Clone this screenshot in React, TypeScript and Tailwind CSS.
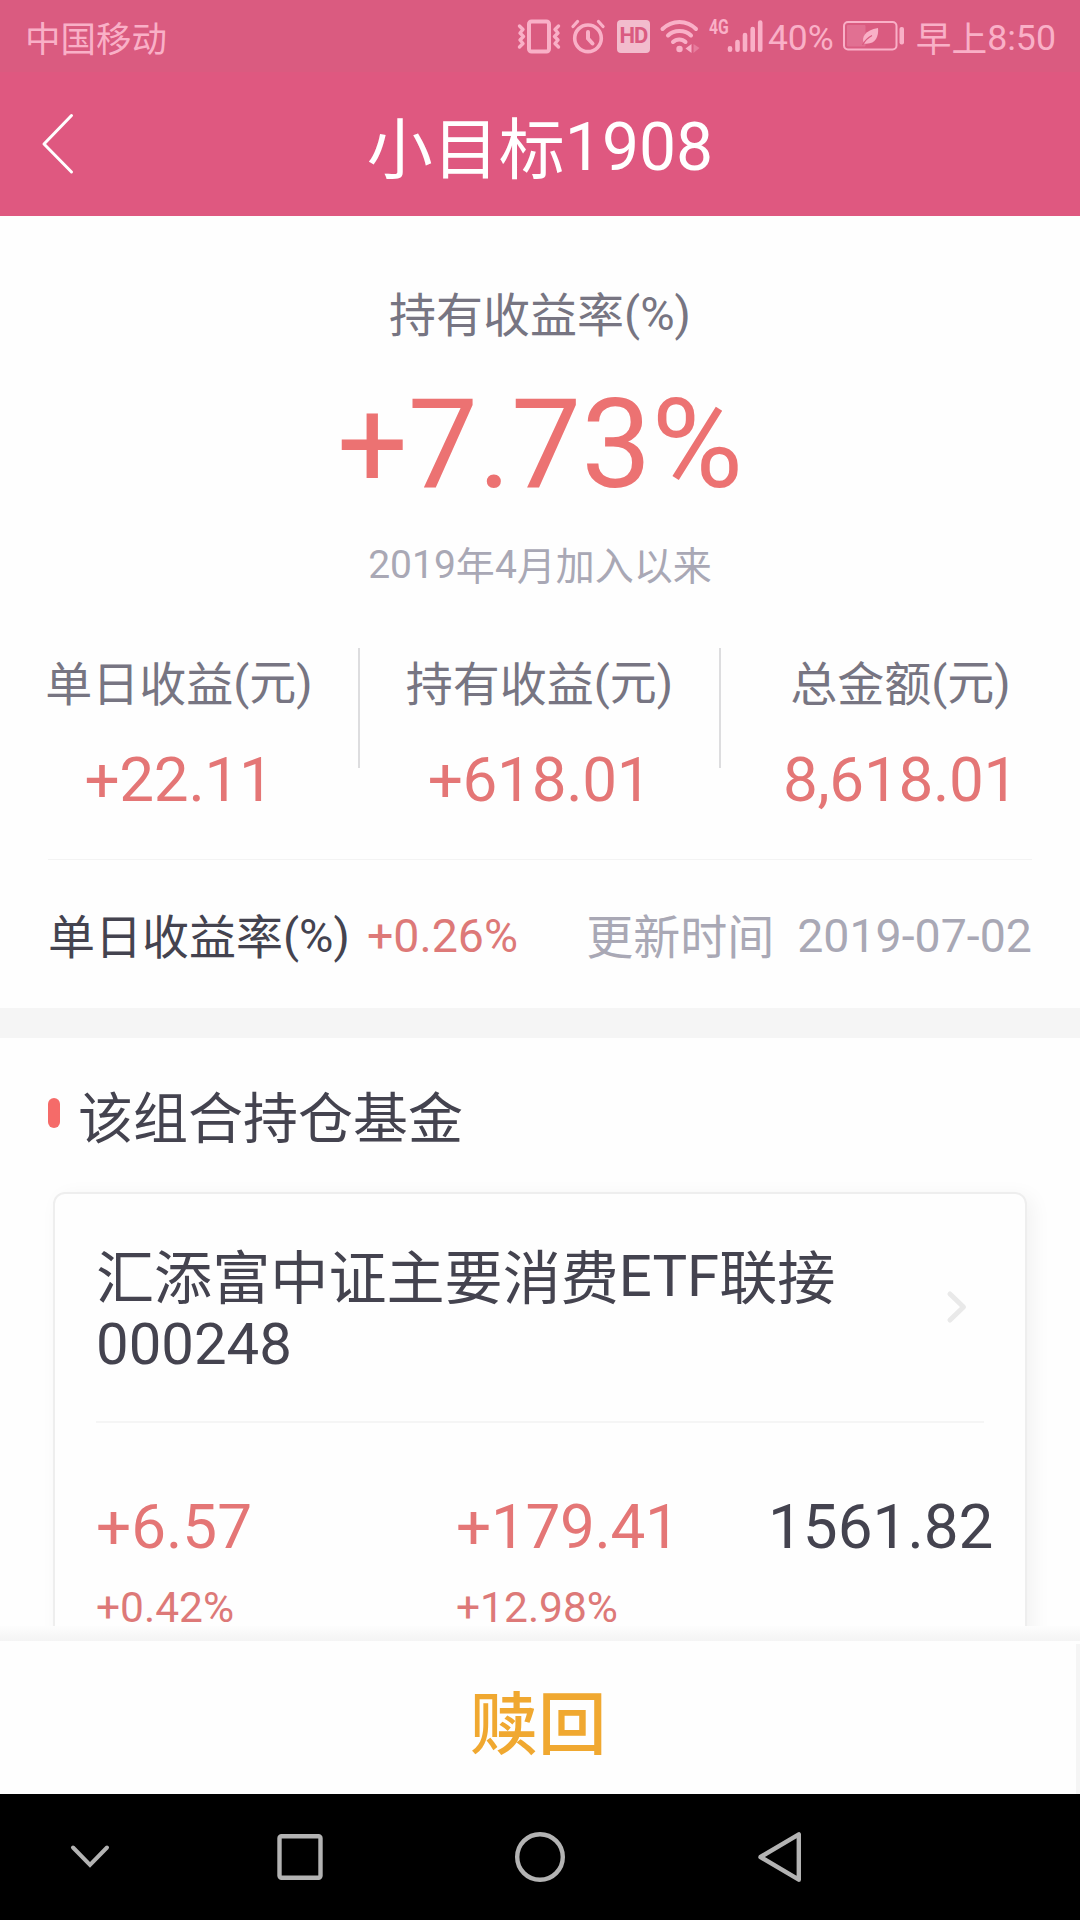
import { ReactNode } from "react";

const summary = [
    { label: "单日收益", unit: "(元)", value: "+22.11", width: "w-[360px]" },
    { label: "持有收益", unit: "(元)", value: "+618.01", width: "w-[361px]" },
    { label: "总金额", unit: "(元)", value: "8,618.01", width: "w-[359px]" },
];

// Chinese glyphs sit slightly high next to Roboto digits
function Cn({ children }: { children: ReactNode }) {
    return <span className="align-[-0.045em] leading-none">{children}</span>;
}

function VibrateIcon() {
    return (
        <svg width="44" height="36" viewBox="0 0 44 36" fill="none" stroke="currentColor" strokeLinecap="round" strokeLinejoin="round">
            <rect x="12" y="3.5" width="20" height="30" rx="2.5" strokeWidth="4" />
            <path d="M2.500 8l3.500 3.500L3 15l3.500 3.500L3 22l3 3.500L2.500 29" strokeWidth="3.400" />
            <path d="M41.500 8l-3.500 3.500 3 3.500-3.500 3.500 3.500 3.500-3 3.500 3.500 3.500" strokeWidth="3.400" />
        </svg>
    );
}

function AlarmIcon() {
    return (
        <svg width="34" height="36" viewBox="0 0 34 36" fill="none" stroke="currentColor" strokeLinecap="round">
            <circle cx="17" cy="20.300" r="13.300" strokeWidth="3.600" />
            <path d="M17 14v6.500l4.500 5" strokeWidth="4" />
            <path d="M2 8.500l4.500-5M32 8.500l-4.500-5" strokeWidth="3.200" />
        </svg>
    );
}

function WifiIcon() {
    return (
        <svg width="42" height="36" viewBox="0 0 42 36" fill="none" stroke="currentColor" strokeWidth="4" strokeLinecap="round">
            <path d="M3.500 11C13 1.500 28 1.500 37 11" />
            <path d="M9 17.500c6-6 17-6 23 0" />
            <path d="M14 24c3.500-3.500 9-3.500 12.500 0" />
            <circle cx="20.500" cy="31" r="3.200" fill="currentColor" stroke="none" />
            <path d="M32.500 26v9l-6-4.500z" fill="currentColor" stroke="none" />
            <path d="M34.500 26v9l6-5z" fill="currentColor" stroke="none" opacity="0.4" />
        </svg>
    );
}

function SignalIcon() {
    return (
        <svg width="36" height="36" viewBox="0 0 36 36" stroke="currentColor" strokeWidth="4.600" strokeLinecap="round">
            <path d="M3 30.200v1.500M10.500 24v7.700M18 17v14.700M25.700 11v20.700M33.200 4.500v27.200" />
        </svg>
    );
}

function BatteryIcon() {
    return (
        <svg width="62" height="32" viewBox="0 0 62 32" fill="none">
            <rect x="1" y="2" width="52.500" height="27.500" rx="4" stroke="currentColor" strokeWidth="2" />
            <rect x="4" y="5" width="18.500" height="21.500" rx="1" fill="currentColor" opacity="0.25" />
            <path d="M35 8c1 9-3 17-14 15.500-3-6 1-13.500 14-15.500z" fill="currentColor" />
            <path d="M19.500 25c2.500-4.500 5.500-7.500 9.500-9.500" stroke="#da5b80" strokeWidth="1.300" />
            <rect x="56.500" y="7" width="4.500" height="17.500" rx="2" fill="currentColor" />
        </svg>
    );
}

function StatusBar() {
    return (
        <div className="flex h-[72px] items-center justify-between bg-[#da5b80] pt-1 pr-6 pl-[25px] text-[35.7px] leading-[40px] text-[#f9b0c7]">
            <span className="pt-[3px] text-[35.5px]">中国移动</span>
            <div className="flex items-center">
                <span className="-mt-[3px] flex">
                    <VibrateIcon />
                </span>
                <span className="-mt-[3px] ml-[10px] flex">
                    <AlarmIcon />
                </span>
                <span className="-mt-[3px] ml-[12px] flex h-[33px] w-[33px] items-center justify-center rounded-[4px] bg-[#f2bccd] text-[22px] font-bold tracking-[-1px] text-[#da5b80]">
                    HD
                </span>
                <span className="-mt-[3px] ml-[9px] flex">
                    <WifiIcon />
                </span>
                <span className="-mt-px ml-[8px] w-[18px] origin-left scale-x-75 self-start text-[21px] leading-[20px] font-bold">4G</span>
                <span className="-mt-[3px] flex">
                    <SignalIcon />
                </span>
                <span className="ml-[5px] text-[35.5px]">40%</span>
                <span className="-mt-[3px] ml-[9px] flex">
                    <BatteryIcon />
                </span>
                <span className="ml-[11px]">
                    <Cn>早上</Cn>8:50
                </span>
            </div>
        </div>
    );
}

function Header() {
    return (
        <header className="relative flex h-[144px] items-center justify-center bg-[#df5880] pt-[7px] text-white">
            <svg className="absolute top-[40px] left-[41px]" width="34" height="64" viewBox="0 0 34 64" fill="none" stroke="currentColor" strokeWidth="3" strokeLinecap="round" strokeLinejoin="round">
                <path d="M30.500 3.500L3 32l27.500 28" />
            </svg>
            <h1 className="text-[66px] leading-[80px]">
                <Cn>小目标</Cn>1908
            </h1>
        </header>
    );
}

function Summary() {
    return (
        <section className="pt-[66px]">
            <div className="text-center">
                <p className="text-[47px] leading-[64px] text-[#777582]">
                    <Cn>持有收益率</Cn>(%)
                </p>
                <p className="mt-[37px] text-[125px] leading-[124px] text-[#ec7272]">+7.73%</p>
                <p className="mt-[34px] text-[39px] leading-[48px] text-[#a9a8b5]">
                    2019<Cn>年</Cn>4<Cn>月加入以来</Cn>
                </p>
            </div>
            <div className="mt-[59px] flex h-[211px] items-start text-center">
                {summary.map((item, i) => (
                    <div key={item.label} className={`flex items-start ${item.width}`}>
                        <div className="flex-1 pt-[5px]">
                            <p className="text-[47px] leading-[60px] text-[#777582]">
                                <Cn>{item.label}</Cn>
                                {item.unit}
                            </p>
                            <p className="mt-[35px] text-[62px] leading-[64px] tracking-[-0.3px] text-[#e47676]">{item.value}</p>
                        </div>
                        {i < 2 && <div className="h-[120px] w-0.5 bg-[#dddddf]" />}
                    </div>
                ))}
            </div>
            <div className="mx-12 h-px bg-[#f3f3f3]" />
            <div className="flex h-[148px] items-center pt-[4px] pr-12 pl-12 text-[47px] leading-[60px]">
                <span className="text-[#44434f]">
                    <Cn>单日收益率</Cn>(%)
                </span>
                <span className="ml-[17px] text-[46.5px] text-[#dd7978]">+0.26%</span>
                <span className="ml-auto text-[#a9a8b5]">
                    <Cn>更新时间</Cn>
                </span>
                <span className="ml-[23px] text-[46.5px] text-[#a9a8b5]">2019-07-02</span>
            </div>
        </section>
    );
}

function Value({ children, className }: { children: ReactNode; className: string }) {
    return <p className={`text-[62px] leading-[64px] ${className}`}>{children}</p>;
}

function Holdings() {
    return (
        <section className="pt-[51px]">
            <div className="flex items-start pl-12">
                <span className="mt-[9px] h-[30px] w-3 rounded-full bg-[#f56b69]" />
                <h2 className="ml-[18px] text-[55px] leading-[60px] text-[#44434f]">该组合持仓基金</h2>
            </div>
            <div className="mx-[53px] mt-[43px] h-[520px] rounded-xl border-2 border-[#eeeeee] pt-[48px] pr-[41px] pl-[41px] shadow-[6px_4px_20px_rgba(0,0,0,0.05)]">
                <div className="flex items-center justify-between text-[58.1px] leading-[68px] text-[#44434f]">
                    <p>
                        <Cn>汇添富中证主要消费</Cn>ETF<Cn>联接</Cn>
                        <br />
                        000248
                    </p>
                    <svg className="mt-[-6px] mr-[16px]" width="22" height="34" viewBox="0 0 22 34" fill="none" stroke="#e9e9e9" strokeWidth="5" strokeLinecap="round" strokeLinejoin="round">
                        <path d="M4 4l13.500 13L4 30" />
                    </svg>
                </div>
                <div className="mt-[43px] h-0.5 bg-[#f5f5f5]" />
                <div className="mt-[72px] flex">
                    <div className="w-[360px] shrink-0">
                        <Value className="text-[#e47676]">+6.57</Value>
                        <p className="mt-[32px] text-[42.5px] leading-[34px] text-[#dd7978]">+0.42%</p>
                    </div>
                    <div className="w-[312px] shrink-0">
                        <Value className="tracking-[-0.3px] text-[#e47676]">+179.41</Value>
                        <p className="mt-[32px] text-[42.5px] leading-[34px] text-[#dd7978]">+12.98%</p>
                    </div>
                    <Value className="text-[#44434f]">1561.82</Value>
                </div>
            </div>
        </section>
    );
}

function NavBar() {
    return (
        <nav className="flex h-[126px] items-center bg-black text-[#b3b3b3]">
            <svg className="ml-[60px]" width="60" height="60" viewBox="0 0 60 60" fill="none" stroke="currentColor" strokeWidth="4" strokeLinecap="round">
                <path d="M13 20.500l17 17.500 17-17.500" />
            </svg>
            <svg className="ml-[150px]" width="60" height="60" viewBox="0 0 60 60" fill="none" stroke="currentColor" strokeWidth="4.400">
                <rect x="9.500" y="9.300" width="41" height="41.500" rx="2" />
            </svg>
            <svg className="ml-[180px]" width="60" height="60" viewBox="0 0 60 60" fill="none" stroke="currentColor" strokeWidth="4.400">
                <circle cx="30" cy="30" r="22.800" />
            </svg>
            <svg className="ml-[180px]" width="60" height="60" viewBox="0 0 60 60" fill="none" stroke="currentColor" strokeWidth="4.400" strokeLinejoin="round">
                <path d="M48.800 7.300v45.400L10.500 30z" />
            </svg>
        </nav>
    );
}

export default function App() {
    return (
        <div className="flex h-[1920px] w-[1080px] flex-col overflow-hidden bg-[#fefefe] font-['Roboto','Noto_Sans_CJK_SC',sans-serif]">
            <StatusBar />
            <Header />
            <main className="h-[1410px] overflow-hidden">
                <Summary />
                <div className="h-[30px] bg-[#f5f5f5]" />
                <Holdings />
            </main>
            <div className="h-[15px] bg-linear-to-b from-[#fdfdfd] to-[#f4f4f4]" />
            <div className="mt-[3px] flex h-[150px] items-center justify-center border-r-4 border-[#f5f5f5] pt-[14px]">
                <button className="text-[68.5px] leading-[80px] font-medium text-[#f0a830]">赎回</button>
            </div>
            <NavBar />
        </div>
    );
}
